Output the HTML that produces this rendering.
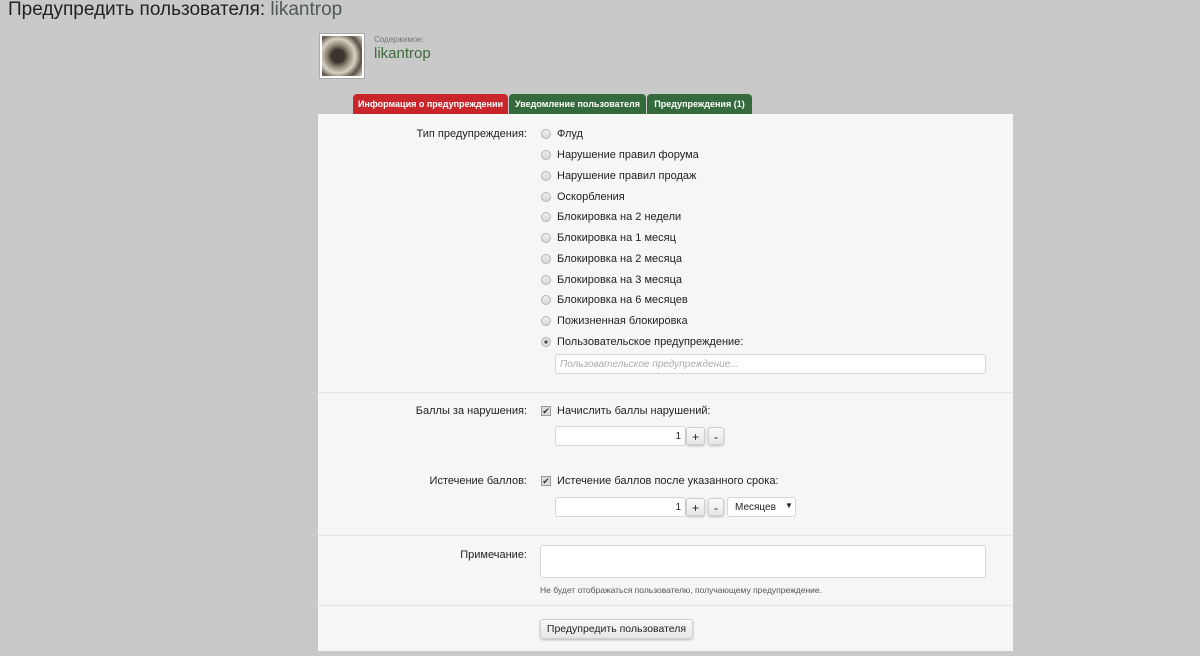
<!DOCTYPE html>
<html><head><meta charset="utf-8"><style>
*{box-sizing:border-box;margin:0;padding:0}
body{width:1200px;height:656px;background:#c9c9c9;font-family:"Liberation Sans","DejaVu Sans",sans-serif;position:relative;overflow:hidden;color:#222}
.a{position:absolute;white-space:nowrap}
h1{position:absolute;left:8px;top:-1px;font-size:19px;font-weight:normal;color:#222}
h1 span{color:#4d5a52}
.tab{position:absolute;top:94px;height:20px;border-radius:4px 4px 0 0;color:#fff;font-size:9px;font-weight:bold;line-height:20px;text-align:center}
.panel{position:absolute;left:318px;top:114px;width:695px;height:537px;background:#f6f6f6}
.sep{position:absolute;left:318px;width:695px;height:1px;background:#e3e3e3}
.lbl{position:absolute;right:673px;font-size:11px;color:#222}
.r{position:absolute;left:541px;width:10px;height:10px;border-radius:50%;border:1px solid #b5b5b5;background:linear-gradient(#eee,#d8d8d8)}
.t{position:absolute;left:557px;font-size:11px;color:#222}
.in{position:absolute;background:#fff;border:1px solid #d6d6d6;border-radius:3px}
.btn{position:absolute;background:linear-gradient(#fafafa,#e6e6e6);border:1px solid #d0d0d0;border-radius:3px;box-shadow:0 1px 2px rgba(0,0,0,.25);font-size:12px;text-align:center;line-height:18px}
.cb{position:absolute;left:541px;width:10px;height:10px;border:1px solid #999;background:#ddd;font-size:9px;line-height:8px;text-align:center;color:#333}
</style></head><body>
<h1>Предупредить пользователя: <span>likantrop</span></h1>
<div class="a" style="left:319px;top:33px;width:46px;height:46px;border:1px solid #aaa;background:#fff;padding:2px"><div style="width:100%;height:100%;background:radial-gradient(circle at 40% 50%,#3a352c 0 20%,#8a8070 35%,#d8d2c4 55%,#5a5246 75%,#e0dacb)"></div></div>
<div class="a" style="left:374px;top:35px;font-size:8px;color:#777">Содержимое:</div>
<div class="a" style="left:374px;top:45px;font-size:15px;color:#3d6b3d">likantrop</div>
<div class="tab" style="left:353px;width:155px;background:#c8262b">Информация о предупреждении</div>
<div class="tab" style="left:509px;width:137px;background:#356b3c">Уведомление пользователя</div>
<div class="tab" style="left:647px;width:105px;background:#356b3c">Предупреждения (1)</div>
<div class="panel"></div>
<div class="lbl" style="top:128px">Тип предупреждения:</div>
<div class="r" style="top:129px"></div><div class="t" style="top:128px">Флуд</div>
<div class="r" style="top:150px"></div><div class="t" style="top:149px">Нарушение правил форума</div>
<div class="r" style="top:171px"></div><div class="t" style="top:170px">Нарушение правил продаж</div>
<div class="r" style="top:192px"></div><div class="t" style="top:191px">Оскорбления</div>
<div class="r" style="top:212px"></div><div class="t" style="top:211px">Блокировка на 2 недели</div>
<div class="r" style="top:233px"></div><div class="t" style="top:232px">Блокировка на 1 месяц</div>
<div class="r" style="top:254px"></div><div class="t" style="top:253px">Блокировка на 2 месяца</div>
<div class="r" style="top:275px"></div><div class="t" style="top:274px">Блокировка на 3 месяца</div>
<div class="r" style="top:295px"></div><div class="t" style="top:294px">Блокировка на 6 месяцев</div>
<div class="r" style="top:316px"></div><div class="t" style="top:315px">Пожизненная блокировка</div>
<div class="r" style="top:337px;background:radial-gradient(#555 0 25%,#e3e3e3 35%)"></div><div class="t" style="top:336px">Пользовательское предупреждение:</div>
<div class="in" style="left:555px;top:354px;width:431px;height:20px"><span class="a" style="left:4px;top:4px;font-size:10px;font-style:italic;color:#aaa">Пользовательское предупреждение...</span></div>
<div class="sep" style="top:392px"></div>
<div class="lbl" style="top:405px">Баллы за нарушения:</div>
<div class="cb" style="top:406px">✔</div><div class="t" style="top:405px">Начислить баллы нарушений:</div>
<div class="in" style="left:555px;top:426px;width:131px;height:20px"><span class="a" style="right:4px;top:4px;font-size:10px">1</span></div>
<div class="btn" style="left:686px;top:427px;width:19px;height:18px">+</div>
<div class="btn" style="left:708px;top:427px;width:16px;height:18px">-</div>
<div class="lbl" style="top:475px">Истечение баллов:</div>
<div class="cb" style="top:476px">✔</div><div class="t" style="top:475px">Истечение баллов после указанного срока:</div>
<div class="in" style="left:555px;top:497px;width:131px;height:20px"><span class="a" style="right:4px;top:4px;font-size:10px">1</span></div>
<div class="btn" style="left:686px;top:498px;width:19px;height:18px">+</div>
<div class="btn" style="left:708px;top:498px;width:16px;height:18px">-</div>
<div class="in" style="left:727px;top:497px;width:69px;height:20px"><span class="a" style="left:7px;top:4px;font-size:10px">Месяцев</span><span class="a" style="left:57px;top:3px;font-size:8px">▼</span></div>
<div class="sep" style="top:535px"></div>
<div class="lbl" style="top:549px">Примечание:</div>
<div class="in" style="left:540px;top:545px;width:446px;height:33px"></div>
<div class="a" style="left:540px;top:585px;font-size:8.5px;color:#555">Не будет отображаться пользователю, получающему предупреждение.</div>
<div class="sep" style="top:605px"></div>
<div class="btn" style="left:540px;top:619px;width:153px;height:20px;font-size:10.5px">Предупредить пользователя</div>
</body></html>
